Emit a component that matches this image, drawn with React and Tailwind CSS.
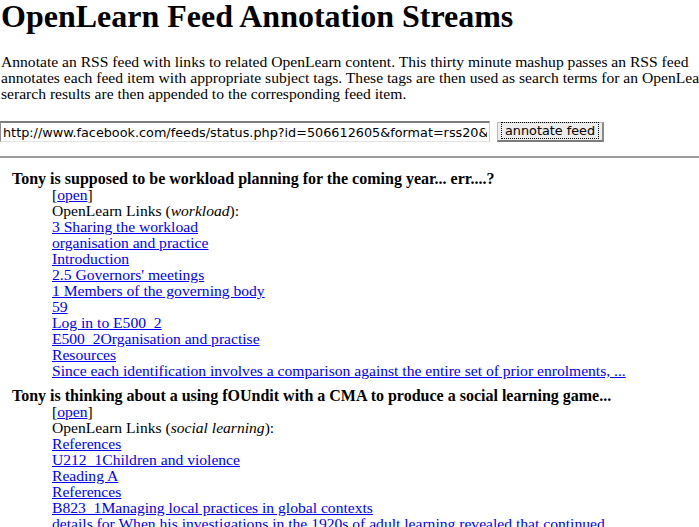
import React from "react";

const items = [
  {
    title: "Tony is supposed to be workload planning for the coming year... err....?",
    tag: "workload",
    links: [
      "3 Sharing the workload",
      "organisation and practice",
      "Introduction",
      "2.5 Governors' meetings",
      "1 Members of the governing body",
      "59",
      "Log in to E500_2",
      "E500_2Organisation and practise",
      "Resources",
      "Since each identification involves a comparison against the entire set of prior enrolments, ...",
    ],
  },
  {
    title: "Tony is thinking about a using fOUndit with a CMA to produce a social learning game...",
    tag: "social learning",
    links: [
      "References",
      "U212_1Children and violence",
      "Reading A",
      "References",
      "B823_1Managing local practices in global contexts",
      "details for When his investigations in the 1920s of adult learning revealed that continued ..",
    ],
  },
];

const serif = "font-['Liberation_Serif','Times_New_Roman',serif]";
const sans = "font-['DejaVu_Sans','Lucida_Grande',sans-serif]";

function FeedItem({ item }) {
  return (
    <div className="mb-[9px]">
      <div className="pl-[12px] text-[16px] font-bold whitespace-nowrap">{item.title}</div>
      <div className="pl-[52px]">
        <div>
          [<a href="#" className="text-[#0000ee] underline">open</a>]
        </div>
        <div>
          OpenLearn Links (<i>{item.tag}</i>):
        </div>
        {item.links.map((l, i) => (
          <div key={i} className="whitespace-nowrap">
            <a href="#" className="text-[#0000ee] underline">
              {l}
            </a>
          </div>
        ))}
      </div>
    </div>
  );
}

export default function App() {
  return (
    <div
      className={`w-[699px] h-[527px] overflow-hidden bg-white text-black text-[15.6px] leading-[16px] ${serif}`}
    >
      <div className="pl-px">
        <h1 className="text-[32px] font-bold leading-[35px] -mt-px whitespace-nowrap">
          OpenLearn Feed Annotation Streams
        </h1>
        <p className="mt-[20px] whitespace-nowrap">
          Annotate an RSS feed with links to related OpenLearn content. This thirty minute mashup passes an RSS feed
          <br />
          annotates each feed item with appropriate subject tags. These tags are then used as search terms for an OpenLearn search, and the
          <br />
          serarch results are then appended to the corresponding feed item.
        </p>
      </div>
      <form className="mt-[19px] flex items-center gap-[6px]" onSubmit={(e) => e.preventDefault()}>
        <input
          readOnly
          value="http://www.facebook.com/feeds/status.php?id=506612605&format=rss20&viewer=506612605&key=a1b2c3"
          className={`w-[490px] h-[21px] px-[2px] text-[12.8px] text-black bg-white border border-[#a5a5a5] border-t-2 border-t-[#7c7c7c] border-l-[#8c8c8c] border-b-[#e4e4e4] border-r-[#d0d0d0] outline-none ${sans}`}
        />
        <button
          type="submit"
          className={`ml-[1px] h-[20px] px-[3px] text-[12.8px] text-black bg-[#ececec] border border-[#bdbdbd] border-b-2 border-r-2 border-b-[#7d7d7d] border-r-[#8a8a8a] ${sans}`}
        >
          <span className="px-[3px] border border-dotted border-black leading-[14px]">
            annotate feed
          </span>
        </button>
      </form>
      <div className="mt-[14px] h-[2px] w-full bg-[#9d9d9d]" />
      <div className="mt-[13px]">
        {items.map((item, i) => (
          <FeedItem key={i} item={item} />
        ))}
      </div>
    </div>
  );
}
